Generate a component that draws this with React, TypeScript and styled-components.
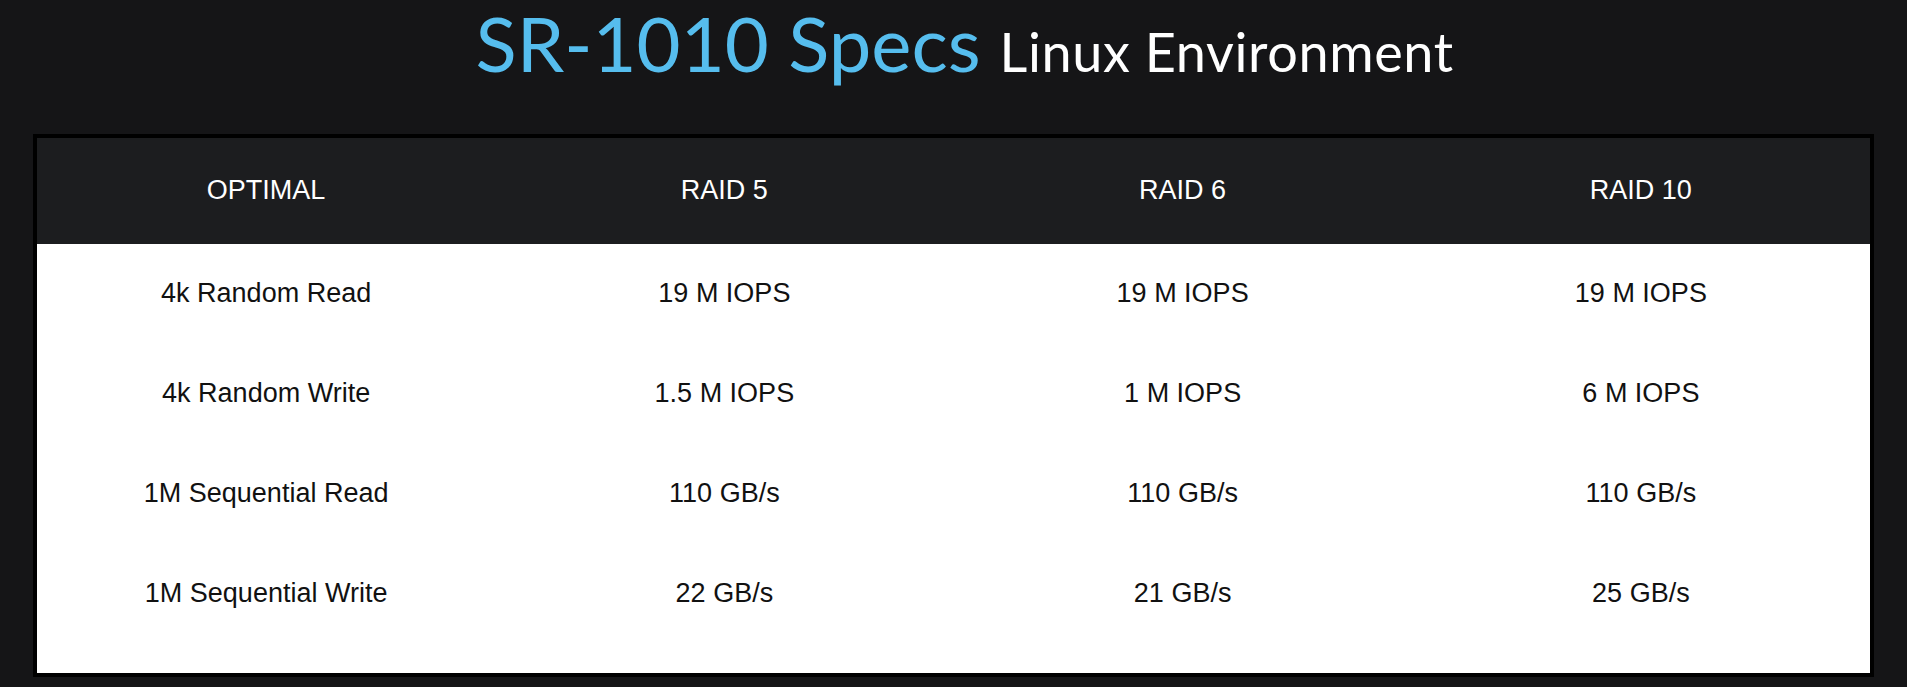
import React from "react";
import styled, { createGlobalStyle } from "styled-components";

const Global = createGlobalStyle`
  html, body {
    margin: 0;
    padding: 0;
    background: #151517;
  }
  body {
    font-family: "Liberation Sans", Arial, sans-serif;
  }
`;

const Page = styled.div`
  width: 1907px;
  height: 687px;
  background: #151517;
  display: flex;
  flex-direction: column;
  box-sizing: border-box;
  padding: 0 33px;
`;

const TitleBar = styled.h1`
  margin: 0;
  height: 134px;
  display: flex;
  justify-content: center;
  align-items: baseline;
  gap: 19px;
  padding-left: 22px;
  padding-top: 13px;
  box-sizing: border-box;
  font-family: Lato, "Open Sans", sans-serif;
  font-weight: 400;
`;

const TitleMain = styled.span`
  display: inline-block;
  color: #56bdee;
  font-size: 76px;
  line-height: 60px;
`;

const TitleSub = styled.span`
  display: inline-block;
  color: #ffffff;
  font-size: 54px;
  line-height: 44px;
  letter-spacing: 0.6px;
`;

const Table = styled.div`
  border: 4px solid #000;
  background: #fff;
  display: flex;
  flex-direction: column;
`;

const Row = styled.div<{ $head?: boolean }>`
  display: grid;
  grid-template-columns: repeat(4, 1fr);
  height: ${(p) => (p.$head ? "106px" : "100px")};
  background: ${(p) => (p.$head ? "#1c1d1f" : "#ffffff")};
  color: ${(p) => (p.$head ? "#ffffff" : "#111111")};
`;

const Body = styled.div`
  padding-bottom: 29px;
  background: #fff;
`;

const Cell = styled.div`
  display: flex;
  align-items: center;
  justify-content: center;
  font-family: "Liberation Sans", Arial, sans-serif;
  font-size: 27px;
  padding-bottom: 2px;
`;

const head = ["OPTIMAL", "RAID 5", "RAID 6", "RAID 10"];
const rows = [
  ["4k Random Read", "19 M IOPS", "19 M IOPS", "19 M IOPS"],
  ["4k Random Write", "1.5 M IOPS", "1 M IOPS", "6 M IOPS"],
  ["1M Sequential Read", "110 GB/s", "110 GB/s", "110 GB/s"],
  ["1M Sequential Write", "22 GB/s", "21 GB/s", "25 GB/s"],
];

export default function App() {
  return (
    <>
      <Global />
      <Page>
        <TitleBar>
          <TitleMain>SR-1010 Specs</TitleMain>
          <TitleSub>Linux Environment</TitleSub>
        </TitleBar>
        <Table>
          <Row $head>
            {head.map((h) => (
              <Cell key={h}>{h}</Cell>
            ))}
          </Row>
          <Body>
            {rows.map((r) => (
              <Row key={r[0]}>
                {r.map((c, i) => (
                  <Cell key={i}>{c}</Cell>
                ))}
              </Row>
            ))}
          </Body>
        </Table>
      </Page>
    </>
  );
}
